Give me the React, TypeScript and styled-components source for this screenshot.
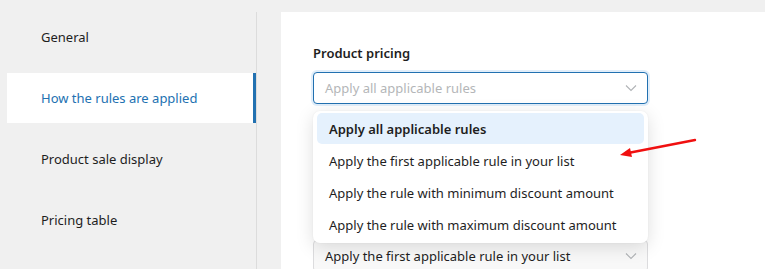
import React from "react";
import styled, { createGlobalStyle } from "styled-components";

const GlobalStyle = createGlobalStyle`
  html, body {
    margin: 0;
    padding: 0;
    background: #f0f0f0;
    font-family: "Noto Sans", "Open Sans", sans-serif;
    color: #1e1e1e;
  }
`;

const Page = styled.div`
  display: flex;
  height: 269px;
  padding-top: 12px;
  box-sizing: border-box;
  overflow: hidden;
  position: relative;
`;

const Sidebar = styled.nav`
  width: 249px;
  margin-left: 7px;
  border-right: 1px solid #dcdcdc;
  display: flex;
  flex-direction: column;
  gap: 11px;
`;

const NavItem = styled.div<{ active?: boolean }>`
  height: 50px;
  display: flex;
  align-items: center;
  padding-left: 34px;
  margin-right: 3px;
  font-size: 13px;
  color: ${(p) => (p.active ? "#2271b1" : "#1e1e1e")};
  background: ${(p) => (p.active ? "#ffffff" : "transparent")};
  box-shadow: ${(p) => (p.active ? "3px 0 0 #2271b1" : "none")};
`;

const Main = styled.main`
  flex: 1;
  margin-left: 24px;
  background: #ffffff;
  padding: 31px 32px 0;
`;

const Field = styled.div<{ gap?: number }>`
  width: 335px;
  position: relative;
  margin-top: ${(p) => p.gap || 0}px;
`;

const Label = styled.div`
  font-size: 13px;
  font-weight: 600;
  line-height: 20px;
  margin-bottom: 9px;
`;

const SelectBox = styled.div<{ focused?: boolean }>`
  height: 32px;
  box-sizing: border-box;
  border: 1px solid ${(p) => (p.focused ? "#2271b1" : "#dcdcde")};
  border-radius: 4px;
  box-shadow: ${(p) => (p.focused ? "0 0 0 2px #e1eefa" : "none")};
  background: ${(p) => (p.focused ? "#ffffff" : "#f8f8f8")};
  display: flex;
  align-items: center;
  justify-content: space-between;
  padding: 0 10px 0 11px;
`;

const SelectText = styled.span<{ placeholder?: boolean }>`
  font-size: 13px;
  color: ${(p) => (p.placeholder ? "#b4b6b8" : "#1e1e1e")};
`;

const Chevron = () => (
  <svg width="12" height="8" viewBox="0 0 12 8" fill="none">
    <path d="M1 1.5 L6 6.5 L11 1.5" stroke="#b0b3b6" strokeWidth="1.1" />
  </svg>
);

const Dropdown = styled.ul`
  position: absolute;
  top: 68px;
  left: 0;
  width: 335px;
  box-sizing: border-box;
  margin: 0;
  padding: 2px 4px;
  list-style: none;
  background: #ffffff;
  border-radius: 7px;
  box-shadow: 0 4px 18px rgba(0, 0, 0, 0.13), 0 0 2px rgba(0, 0, 0, 0.06);
  z-index: 2;
`;

const Option = styled.li<{ selected?: boolean }>`
  height: 31px;
  margin-bottom: 1px;
  display: flex;
  align-items: center;
  padding-left: 12px;
  border-radius: 5px;
  font-size: 13px;
  font-weight: ${(p) => (p.selected ? 600 : 400)};
  background: ${(p) => (p.selected ? "#e5f1fd" : "transparent")};
`;

const Arrow = styled.svg`
  position: absolute;
  left: 613px;
  top: 133px;
  z-index: 3;
`;

const options = [
  "Apply all applicable rules",
  "Apply the first applicable rule in your list",
  "Apply the rule with minimum discount amount",
  "Apply the rule with maximum discount amount",
];

export default function App() {
  return (
    <Page>
      <GlobalStyle />
      <Sidebar>
        <NavItem>General</NavItem>
        <NavItem active>How the rules are applied</NavItem>
        <NavItem>Product sale display</NavItem>
        <NavItem>Pricing table</NavItem>
      </Sidebar>
      <Main>
        <Field>
          <Label>Product pricing</Label>
          <SelectBox focused>
            <SelectText placeholder>Apply all applicable rules</SelectText>
            <Chevron />
          </SelectBox>
          <Dropdown>
            {options.map((o, i) => (
              <Option key={o} selected={i === 0}>
                {o}
              </Option>
            ))}
          </Dropdown>
        </Field>
        <Field gap={136}>
          <SelectBox>
            <SelectText>Apply the first applicable rule in your list</SelectText>
            <Chevron />
          </SelectBox>
        </Field>
      </Main>
      <Arrow width="90" height="30" viewBox="0 0 90 30">
        <path d="M82 7 L15 20" stroke="#f01010" strokeWidth="2.4" strokeLinecap="round" />
        <path d="M7 22 L17 15 L19 24 Z" fill="#f01010" />
      </Arrow>
    </Page>
  );
}
